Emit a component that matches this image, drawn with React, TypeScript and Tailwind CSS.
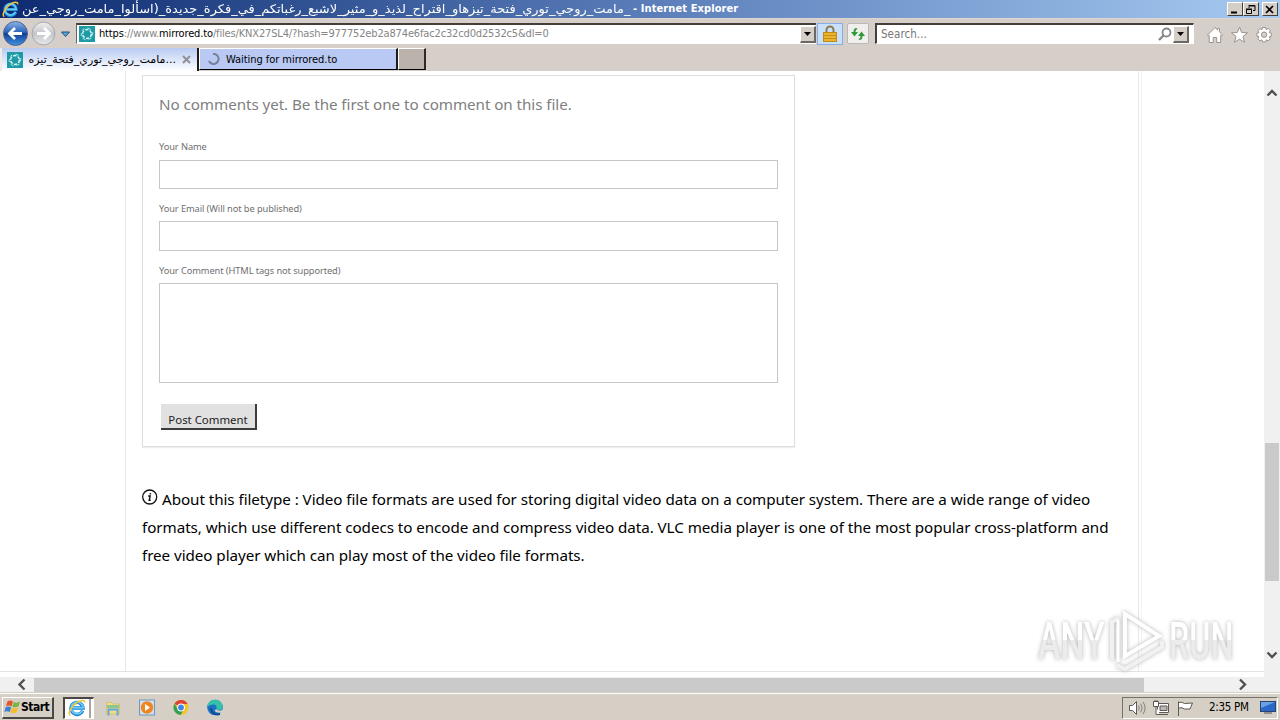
import type { ReactNode } from 'react'

const TITLE = '_مامت_روجي_توري_فتحة_تيزهاو_اقتراح_لذيذ_و_مثير_لاشبع_رغباتكم_في_فكرة_جديدة_(اسألوا_مامت_روجي_عن'

function IeLogo({ size }: { size: number }) {
  return (
    <svg width={size} height={size} viewBox="0 0 18 18" fill="none">
      <path d="M14.6 11.6A6 6 0 1 1 15 9H4.6" stroke="#1683cf" strokeWidth="3.4" />
      <path d="M14.4 11.6A5.9 5.9 0 1 1 15 8.8H4.6" stroke="#6cc8f6" strokeWidth="1.8" />
      <path d="M2.4 16.6C-.6 15 3 8 8 4.2 12 1 17 .2 16.6 3.6" stroke="#f2c53a" strokeWidth="1.6" />
    </svg>
  )
}

function SiteIcon() {
  return (
    <svg width="16" height="16" viewBox="0 0 16 16" fill="none" className="shrink-0">
      <rect width="16" height="16" fill="#1d9aa5" />
      <circle cx="8" cy="8" r="4.4" stroke="#d9f6f4" strokeWidth="1.5" strokeDasharray="3.2 1.4" />
      <path d="M3 4.5l2.5-1.8M8.5 2l3.2 1.4M13.8 6l-.4 3.4M12.4 12l-2.8 1.6M6.6 14l-3-1.8M2.2 10l.2-3" stroke="#a4e8e4" />
    </svg>
  )
}

function Triangle() {
  return (
    <svg width="8" height="4" viewBox="0 0 8 4">
      <path d="M0 0h7L3.5 4z" fill="#000" />
    </svg>
  )
}

function WindowButton({ children, className = '' }: { children: ReactNode; className?: string }) {
  return (
    <button className={`flex h-[14px] w-[16px] items-center justify-center border border-t-white border-l-white border-r-[#404040] border-b-[#404040] bg-[#d4cec7] ${className}`}>
      <svg width="12" height="11" viewBox="0 0 12 11" fill="none" stroke="#000">
        {children}
      </svg>
    </button>
  )
}

function TitleBar() {
  return (
    <div className="flex h-[18px] items-center bg-linear-to-r from-[#0d2a70] via-[#5a7db9] to-[#a6caf0]">
      <span className="ml-[2px] flex w-[18px]"><IeLogo size={17} /></span>
      <div className="flex h-[18px] w-[610px] items-center justify-end whitespace-nowrap font-['DejaVu_Sans',sans-serif] text-[12px] leading-[18px] text-white">
        <span dir="rtl" className="inline-block origin-right scale-x-[1.082]">{TITLE}</span>
      </div>
      <span className="ml-[3px] pt-px whitespace-nowrap font-['DejaVu_Sans_Condensed','DejaVu_Sans',sans-serif] text-[11px] font-bold tracking-[0.1px] text-white">
        - Internet Explorer
      </span>
      <div className="mr-[2px] ml-auto flex">
        <WindowButton><path d="M2 8.5h6" strokeWidth="2" /></WindowButton>
        <WindowButton><path d="M4 1.5h6v5H8M4 2.5V4M4 1v1h6M1.5 5.5h5v4h-5zM1 5h6" /></WindowButton>
        <WindowButton className="ml-[3px]"><path d="M2 2l7 7M9 2L2 9" strokeWidth="1.7" /></WindowButton>
      </div>
    </div>
  )
}

function AddressBar() {
  return (
    <div className="flex h-[30px] items-center border-t border-[#dcd6d0] bg-[#d6cec8]">
      <svg width="72" height="28" viewBox="0 0 72 28" fill="none">
        <defs>
          <linearGradient id="back" x1="0" y1="0" x2="0" y2="1">
            <stop offset="0" stopColor="#8db4e6" />
            <stop offset=".45" stopColor="#2a63ba" />
            <stop offset=".5" stopColor="#123f94" />
            <stop offset="1" stopColor="#3f94e6" />
          </linearGradient>
          <linearGradient id="forward" x1="0" y1="0" x2="0" y2="1">
            <stop offset="0" stopColor="#f0f0f0" />
            <stop offset=".5" stopColor="#c3c5c9" />
            <stop offset="1" stopColor="#e8e9ec" />
          </linearGradient>
        </defs>
        <circle cx="15.5" cy="13.5" r="12" fill="url(#back)" stroke="#54658a" />
        <path d="M22 13.5H10M15 8L9.5 13.5l5.5 5.5" stroke="#fff" strokeWidth="2.8" />
        <circle cx="43.5" cy="13.5" r="11.4" fill="url(#forward)" stroke="#a5a7ab" />
        <path d="M37 13.5h12M44 8l5.5 5.5-5.5 5.5" stroke="#fff" strokeWidth="2.8" />
        <path d="M61.5 12h8l-4 4.5z" fill="#5aa7d4" stroke="#1d4d7c" />
      </svg>
      <div className="ml-[4px] flex h-[21px] w-[740px] items-center border-t-2 border-b border-l border-t-[#463e39] border-b-white border-l-[#6b625d] bg-white pl-[2px]">
        <SiteIcon />
        <span className="ml-[4px] pt-px whitespace-nowrap font-['DejaVu_Sans_Condensed','DejaVu_Sans',sans-serif] text-[11px] tracking-[-0.15px] text-[#858585]">
          <span className="text-black">https</span>://www.<span className="text-black">mirrored.to</span>/files/KNX27SL4/?hash=977752eb2a874e6fac2c32cd0d2532c5&amp;dl=0
        </span>
        <DropButton />
      </div>
      <div className="ml-[1px] flex h-[22px] w-[26px] items-center justify-center border border-[#86aee4] bg-[#c9e0fb]">
        <svg width="14" height="17" viewBox="0 0 14 17" fill="none">
          <path d="M3.5 8V5a3.5 3.5 0 0 1 7 0v3" stroke="#8e7a4c" strokeWidth="2" />
          <rect x=".5" y="7.5" width="13" height="9" fill="#eeb32c" stroke="#c08a1b" />
          <path d="M1 10.5h12M1 13.5h12" stroke="#c58f1d" />
        </svg>
      </div>
      <div className="ml-[4px] flex h-[21px] w-[22px] items-center justify-center rounded-[2px] border border-[#bcb8b3] bg-[#f0efee]">
        <svg width="16" height="14" viewBox="0 0 16 14" className="shrink-0">
          <path d="M6.5 1C4.5 1 3.5 2.5 3.5 5H1l3.5 4.5L8 5H5.5C5.5 3.5 6 2.5 7.5 2z" fill="#2f9a3a" />
          <path d="M9.5 13c2 0 3-1.500 3-4H15l-3.500-4.500L8 9h2.500c0 1.500-.5 2.500-2 3z" fill="#2f9a3a" />
        </svg>
      </div>
      <div className="ml-[6px] flex h-[21px] w-[319px] items-center border-t-2 border-r border-b border-l-2 border-t-[#463e39] border-r-white border-b-white border-l-[#463e39] bg-white pl-[4px]">
        <span className="pt-[2px] font-['DejaVu_Sans_Condensed','DejaVu_Sans',sans-serif] text-[11.5px] tracking-[0.05px] text-[#777]">Search...</span>
        <svg width="14" height="14" viewBox="0 0 14 14" fill="none" stroke="#86868a" className="ml-auto">
          <circle cx="8.5" cy="5.5" r="4" strokeWidth="1.8" />
          <path d="M5.5 8.5L1 13" strokeWidth="2.4" />
        </svg>
        <span className="mr-[4px] ml-[1px] flex"><DropButton /></span>
      </div>
      <svg width="72" height="20" viewBox="0 0 72 20" fill="#fff" stroke="#999390" className="mt-[3px] ml-[12px]">
        <path d="M1.5 10L9 2.5l2.5 2.4V3.500h2v3.300l3 3.200-1 1-.8-.6V17.500h-4v-5h-3.500v5h-4V10.400l-.7.600z" />
        <path d="M33.5 2l2.100 5.400 5.900.4-4.500 3.700 1.500 5.800-5-3.200-5 3.200 1.500-5.800-4.500-3.700 5.900-.4z" />
        <path d="M56.6 2.5h3l.6 2.100 2-1.100 2.100 2.100-1.100 2 2.100.6v3l-2.100.6 1.100 2-2.100 2.100-2-1.100-.6 2.100h-3l-.6-2.100-2 1.100-2.100-2.100 1.100-2-2.100-.6v-3l2.100-.6-1.100-2L54 3.500l2 1.100z" />
        <circle cx="58.1" cy="9.7" r="2.7" fill="#d6cec8" />
      </svg>
    </div>
  )
}

function DropButton() {
  return (
    <span className="ml-auto flex h-[17px] w-[16px] shrink-0 items-center justify-center border border-r-2 border-b-2 border-t-white border-l-white border-r-[#6d6763] border-b-[#6d6763] bg-[#d4cec7]">
      <Triangle />
    </span>
  )
}

function TabRow() {
  return (
    <div className="flex h-[23px] items-start bg-[#d6cec8] font-['DejaVu_Sans_Condensed','DejaVu_Sans',sans-serif] text-[11px] text-black">
      <div className="flex h-[23px] w-[199px] items-center border-r-2 border-l-2 border-r-[#1d1a18] border-l-[#efebe8] bg-linear-to-b from-[#b9cbf2] to-white pl-[5px]">
        <SiteIcon />
        <div className="ml-[5px] w-[148px] pt-[2px] text-right font-['DejaVu_Sans',sans-serif] whitespace-nowrap">
          مامت_روجي_توري_فتحة_تيزه...
        </div>
        <svg width="9" height="9" viewBox="0 0 9 9" stroke="#8f8f96" strokeWidth="2" className="ml-[6px]">
          <path d="M1 1l7 7M8 1L1 8" />
        </svg>
      </div>
      <div className="flex h-[22px] w-[199px] items-center border-t border-r-2 border-b border-l border-t-white border-r-[#1d1a18] border-b-black border-l-white bg-[#b9c9f4] pl-[8px]">
        <svg width="12" height="12" viewBox="0 0 12 12" fill="none" stroke="#78809a" strokeWidth="2">
          <path d="M5 1a5 5 0 1 1-4 7" />
        </svg>
        <span className="ml-[6px] pt-[3px] text-[11px] tracking-[-0.05px]">Waiting for mirrored.to</span>
      </div>
      <div className="h-[22px] w-[28px] border-t border-r-2 border-b border-l border-t-white border-r-[#2e2926] border-b-black border-l-white bg-[#bbb3ab]" />
    </div>
  )
}

function Field({ label, boxClass }: { label: string; boxClass: string }) {
  return (
    <label className="block">
      <span className="block h-[14px] text-[9.3px] leading-[16px] tracking-[-0.1px] text-[#6f6f6f]">{label}</span>
      <span className={`block border border-[#c6c6c6] bg-white ${boxClass}`} />
    </label>
  )
}

function CommentCard() {
  return (
    <section className="h-[372px] w-[653px] border border-[#dedede] px-[16px] pt-[16px] shadow-[0_1px_1px_#eee]">
      <p className="mb-[23px] text-[15.2px] leading-[24px] tracking-[-0.06px] whitespace-nowrap text-[#808080]">
        No comments yet. Be the first one to comment on this file.
      </p>
      <div className="flex flex-col">
        <Field label="Your Name" boxClass="mt-[7px] h-[29px]" />
        <div className="h-[12px]" />
        <Field label="Your Email (Will not be published)" boxClass="mt-[6px] h-[30px]" />
        <div className="h-[12px]" />
        <Field label="Your Comment (HTML tags not supported)" boxClass="mt-[6px] h-[100px]" />
      </div>
      <button className="mt-[21px] ml-[2px] block h-[26px] w-[96px] border-r-2 border-b-2 border-[#3c3c3f] bg-[#e1e1e1] pt-[7px] text-center text-[11.4px] leading-[18px] whitespace-nowrap text-[#222]">
        Post Comment
      </button>
    </section>
  )
}

function Watermark() {
  return (
    <div className="absolute top-[537px] left-[1038px] flex h-[64px] items-center font-['Roboto','Liberation_Sans',sans-serif] text-[52px] leading-[64px] font-medium drop-shadow-[0_0_2px_#b4b4b4]">
      <span className="block w-[68px]">
        <span className="inline-block origin-left scale-x-[0.65] bg-linear-to-b from-white from-50% to-[#ececec] to-50% bg-clip-text pt-[4px] text-transparent">ANY</span>
      </span>
      <svg width="60" height="64" viewBox="0 0 60 64" fill="none" stroke="#fff" strokeWidth="4" className="shrink-0">
        <path d="M19 6v42l34-20z" />
        <path d="M13 10l-7 4v38M11 57l8 4 37-22v-6" stroke="#f1f1f1" />
        <path d="M12 12v42" strokeWidth="3" />
      </svg>
      <span className="ml-[3px] block w-[70px]">
        <span className="inline-block origin-left scale-x-[0.62] bg-linear-to-b from-white from-50% to-[#ececec] to-50% bg-clip-text pt-[4px] text-transparent">RUN</span>
      </span>
    </div>
  )
}

function Page() {
  return (
    <div className="flex h-[621px]">
      <div className="flex w-[1264px] flex-col">
        <main className="relative h-[606px] overflow-hidden bg-white font-['Noto_Sans','Open_Sans',sans-serif]">
          <div className="flex h-[601px] border-b border-[#e4e4e4] pl-[125px]">
            <div className="h-full w-[1014px] border-x border-[#e8e8e8] pt-[4px] pl-[16px]">
              <CommentCard />
              <div className="mt-[38px] text-[15.2px] leading-[28px] tracking-[-0.055px] whitespace-nowrap text-black">
                <div className="flex">
                  <svg width="16" height="16" viewBox="0 0 16 16" fill="none" stroke="#111" className="mt-[4px] mr-[4px]">
                    <circle cx="7.7" cy="8" r="7" strokeWidth="1.3" />
                    <path d="M6.2 7h2L7.2 11.3h1.5M8.4 4v1.4" strokeWidth="1.4" />
                  </svg>
                  <span>About this filetype : Video file formats are used for storing digital video data on a computer system. There are a wide range of video</span>
                </div>
                <div>formats, which use different codecs to encode and compress video data. VLC media player is one of the most popular cross-platform and</div>
                <div>free video player which can play most of the video file formats.</div>
              </div>
            </div>
            <div className="ml-[2px] h-full w-px bg-[#f5f5f5]" />
          </div>
          <Watermark />
        </main>
        <div className="flex h-[15px] items-center bg-[#f0f0f0]">
          <svg width="34" height="15" viewBox="0 0 34 15" fill="none" stroke="#505050" strokeWidth="2.4">
            <path d="M24.5 2.5l-5 5 5 5" />
          </svg>
          <div className="h-[14px] w-[1110px] bg-[#cacaca]" />
          <svg width="120" height="15" viewBox="0 0 120 15" fill="none" stroke="#505050" strokeWidth="2.4">
            <path d="M96 2.5l5 5-5 5" />
          </svg>
        </div>
      </div>
      <div className="flex w-[16px] flex-col items-center bg-[#f0f0f0] pt-[18px]">
        <svg width="12" height="8" viewBox="0 0 12 8" fill="none" stroke="#505050" strokeWidth="2.4">
          <path d="M1.5 6.5L6 2l4.5 4.5" />
        </svg>
        <div className="mt-[346px] h-[138px] w-[14px] bg-[#cacaca]" />
        <svg width="12" height="8" viewBox="0 0 12 8" fill="none" stroke="#505050" strokeWidth="2.4" className="mt-[70px]">
          <path d="M1.5 1.5L6 6l4.5-4.500" />
        </svg>
      </div>
    </div>
  )
}

function Taskbar() {
  return (
    <footer className="flex h-[28px] items-center border-t border-[#d4cec7] bg-[#d6cfc6] font-['DejaVu_Sans_Condensed','DejaVu_Sans',sans-serif] shadow-[inset_0_1px_0_#fff]">
      <button className="mt-[2px] ml-[2px] flex h-[22px] w-[52px] items-center border-t border-r-2 border-b-2 border-l border-t-white border-r-[#4b4744] border-b-[#4b4744] border-l-white">
        <svg width="17" height="16" viewBox="0 0 17 16" className="ml-[1px]">
          <path d="M3.5 2.5Q6 .5 9 2.5L7.5 7.5Q5 5.8 2 7z" fill="#e3562b" />
          <path d="M9.8 3Q12.5 4.5 16 2.5L14.5 7.5Q11 9 8.3 7.8z" fill="#77b544" />
          <path d="M1.8 8Q4.5 6.6 7.2 8.4L5.8 13Q3 11.6.3 13z" fill="#3f7fd0" />
          <path d="M8 8.8Q11 10 14.2 8.6L12.8 13.3Q9.5 15 6.6 13.5z" fill="#f4be2b" />
        </svg>
        <span className="text-[12px] font-bold tracking-[-0.5px] text-black">Start</span>
      </button>
      <div className="mt-[2px] ml-[9px] flex h-[22px] w-[31px] border-t-2 border-r border-b border-l-2 border-t-[#4b4744] border-r-white border-b-white border-l-[#4b4744] bg-white">
        <span className="flex w-[26px] items-center justify-center border-r-2 border-[#aaa49e]"><IeLogo size={18} /></span>
      </div>
      <svg width="128" height="18" viewBox="0 0 128 18" className="mt-[2px] ml-[10px]" fill="none">
        <path d="M2.5 3.5h5l1 1.5h7v10h-13z" fill="#f2dc86" stroke="#d8c078" />
        <path d="M3 6h12v3H3z" fill="#8cc68e" />
        <path d="M4.5 16.5v-6h9v6" stroke="#5fa8de" strokeWidth="2" />
        <rect x="35.5" y="1" width="15" height="15" fill="#cfe0f1" stroke="#6e96bf" />
        <circle cx="43" cy="8.5" r="6.2" fill="#ef8620" />
        <path d="M41 5v7l5-3.5z" fill="#fff" />
        <g transform="translate(-.5 0)">
          <circle cx="77.5" cy="8.5" r="7.5" fill="#f4c526" />
          <path d="M77.5 8.5L71 4.7A7.5 7.5 0 0 1 84.1 5H77.5z" fill="#dc4235" />
          <path d="M71 4.7A7.5 7.5 0 0 0 77 16L80.5 10.5 74.5 10.5z" fill="#35a054" />
          <circle cx="77.5" cy="8.5" r="3.9" fill="#fff" />
          <circle cx="77.5" cy="8.5" r="2.9" fill="#4285e8" />
        </g>
        <g transform="translate(-.5 0)">
          <circle cx="111.5" cy="8.5" r="7.8" fill="#1b70c4" />
          <path d="M104 8C104 3.5 107.5.7 111.5.7 117 .7 120 5 119 9c-.8 2.6-5 2.6-6.2 1.2 1.200-2.800-.5-4.700-3-4.700-3 0-5.300 1.500-5.800 2.500z" fill="#35c1a8" />
          <path d="M107.5 9c0 4.5 4 7.5 9 6" stroke="#0e4a92" strokeWidth="2" />
          <path d="M112.8 10.2c2.5 2.2 5 1.5 7 .3l-1.700 3c-3 .6-6 0-7-2.300z" fill="#d6cfc6" />
        </g>
      </svg>
      <div className="mt-[2px] mr-[2px] ml-auto flex h-[22px] w-[156px] items-center border border-t-[#77716c] border-r-white border-b-white border-l-[#77716c]">
        <svg width="80" height="18" viewBox="0 0 80 18" fill="#fff" stroke="#5c5957">
          <path d="M6.5 6.5h3l4-4v13l-4-4h-3z" />
          <path d="M15.5 6.5q1.500 2.500 0 5M17.700 4.700q3 4.300 0 8.600M20 3q4.200 6 0 12" fill="none" stroke="#85817e" />
          <path d="M34.5 4.5h11v9h-11zM37 15.5h8" />
          <path d="M37 7h7v4.500h-7z" fill="#bcb8b5" />
          <path d="M30.5 2.5h5v5h-5zM32 1v2M34 1v2M33 7.5v8h4" />
          <path d="M55.5 17V2.5M55.5 3.5q3.500-1 6 1l8-.5-2.500 6h-5.500q-2-2-6-1z" />
        </svg>
        <span className="ml-[6px] text-[11.5px] tracking-[-0.3px] whitespace-nowrap text-black">2:35 PM</span>
        <svg width="16" height="16" viewBox="0 0 16 16" className="mr-[1px] ml-auto">
          <rect x=".5" y="1.5" width="15" height="10" fill="#2b68c8" stroke="#27446f" />
          <path d="M1 2h14L1 8z" fill="#6aa2e8" />
          <path d="M4 13h8" stroke="#555" />
        </svg>
      </div>
    </footer>
  )
}

export default function App() {
  return (
    <div className="h-[720px] w-[1280px] overflow-hidden bg-white">
      <TitleBar />
      <AddressBar />
      <TabRow />
      <Page />
      <Taskbar />
    </div>
  )
}
